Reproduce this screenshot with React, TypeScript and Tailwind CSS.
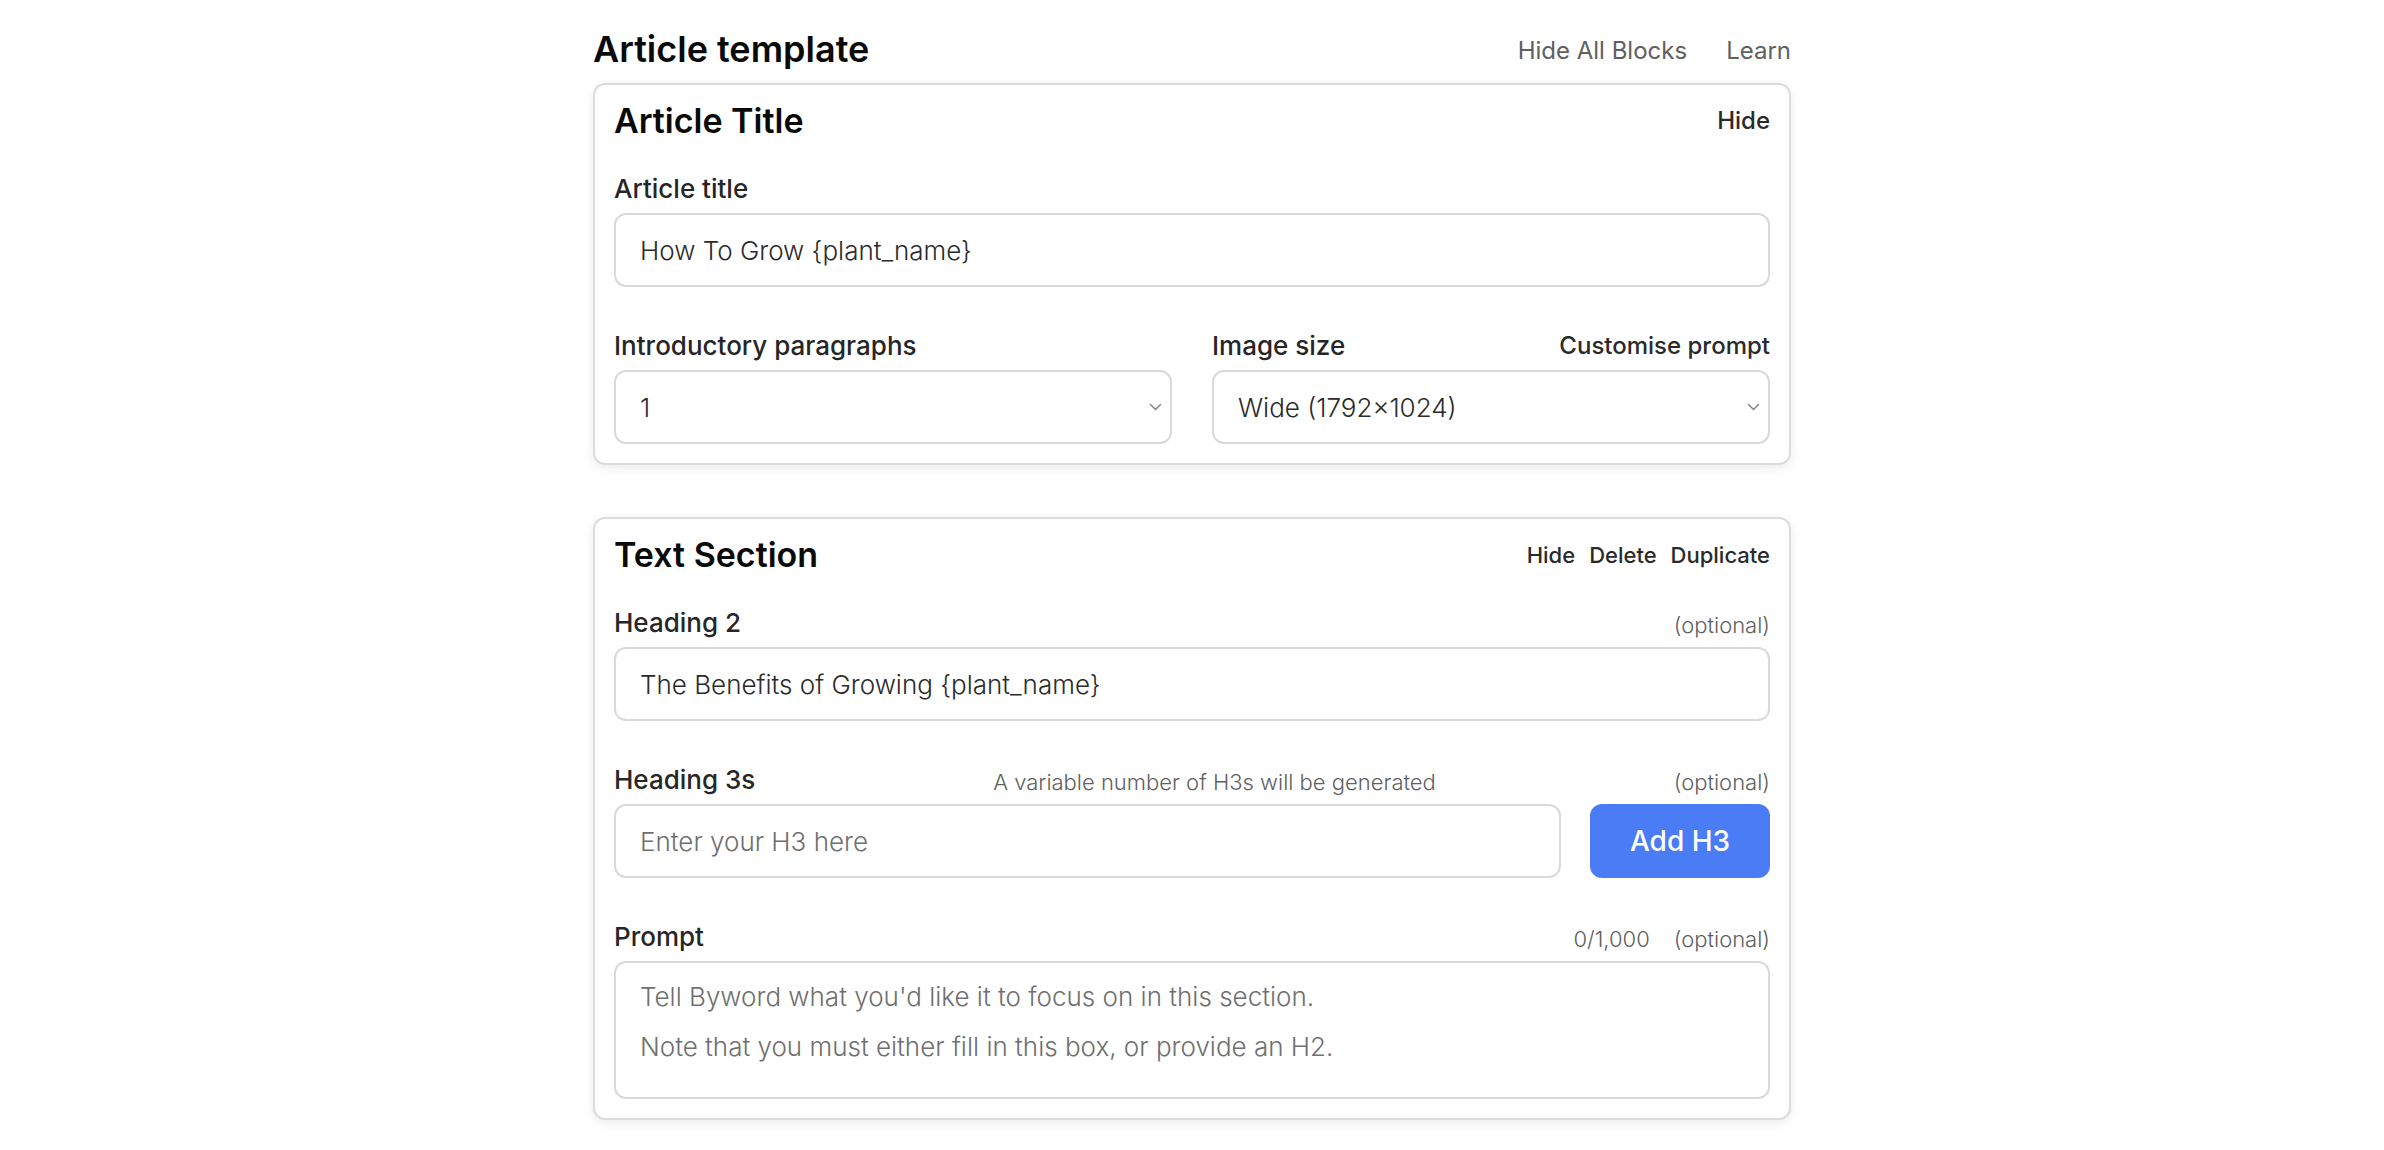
import React from 'react';

const font = { fontFamily: 'Inter, "Noto Sans", sans-serif' };

function Chevron() {
  return (
    <svg
      className="pointer-events-none absolute right-[10px] top-1/2 -translate-y-1/2"
      width="13"
      height="8"
      viewBox="0 0 13 8"
      fill="none"
    >
      <path d="M1.5 1.5l5 5 5-5" stroke="#8a8a8a" strokeWidth="1.6" strokeLinecap="round" strokeLinejoin="round" />
    </svg>
  );
}

interface LabelRowProps {
  label: string;
  right?: React.ReactNode;
  middle?: React.ReactNode;
}

function LabelRow({ label, right, middle }: LabelRowProps) {
  return (
    <div className="mb-[6px] flex h-[36px] items-center justify-between">
      <span className="text-[26px] font-medium leading-none text-[#262626]">{label}</span>
      {middle}
      {right}
    </div>
  );
}

function Optional() {
  return <span className="pt-[4px] text-[22px] font-light text-[#5f5f5f]">(optional)</span>;
}

const inputCls =
  'h-[74px] w-full rounded-[12px] border-2 border-[#d9d9d9] bg-white px-[24px] text-[26px] font-light text-[#2b2b2b] outline-none placeholder:text-[#6f6f6f]';

function Select({ value }: { value: string }) {
  return (
    <div className="relative">
      <select className={inputCls + ' appearance-none'} defaultValue={value}>
        <option>{value}</option>
      </select>
      <Chevron />
    </div>
  );
}

function Card({ title, actions, actionSize, children }: { title: string; actions: string[]; actionSize: string; children: React.ReactNode }) {
  return (
    <div className="rounded-[12px] border-2 border-[#dcdcdc] bg-white px-[19px] pb-[19px] pt-[12px] shadow-[0_3px_12px_rgba(0,0,0,0.08)]">
      <div className="mb-[26px] flex h-[48px] items-center justify-between">
        <h2 className="text-[34px] font-semibold leading-none text-[#0a0a0a]">{title}</h2>
        <div className={'flex items-center gap-[14px] font-medium text-[#2a2a2a] ' + actionSize}>
          {actions.map((a) => (
            <button key={a}>{a}</button>
          ))}
        </div>
      </div>
      <div className="flex flex-col gap-[41px]">{children}</div>
    </div>
  );
}

export default function App() {
  return (
    <div className="min-h-screen bg-white" style={font}>
      <div className="mx-auto w-[1198px] pt-[24px]">
        <div className="mb-[9px] flex h-[50px] items-center justify-between">
          <h1 className="text-[36px] font-semibold leading-none text-[#0a0a0a]">Article template</h1>
          <div className="flex items-center gap-[39px] pt-[4px] text-[24px] text-[#606060]">
            <button>Hide All Blocks</button>
            <button>Learn</button>
          </div>
        </div>

        <div className="flex flex-col gap-[52px]">
          <Card title="Article Title" actions={['Hide']} actionSize="text-[24px]">
            <div>
              <LabelRow label="Article title" />
              <input className={inputCls} defaultValue="How To Grow {plant_name}" />
            </div>
            <div className="grid grid-cols-2 gap-[40px]">
              <div>
                <LabelRow label="Introductory paragraphs" />
                <Select value="1" />
              </div>
              <div>
                <LabelRow
                  label="Image size"
                  right={<span className="text-[24px] font-medium text-[#2a2a2a]">Customise prompt</span>}
                />
                <Select value="Wide (1792×1024)" />
              </div>
            </div>
          </Card>

          <Card title="Text Section" actions={['Hide', 'Delete', 'Duplicate']} actionSize="text-[22px]">
            <div>
              <LabelRow label="Heading 2" right={<Optional />} />
              <input className={inputCls} defaultValue="The Benefits of Growing {plant_name}" />
            </div>
            <div>
              <LabelRow
                label="Heading 3s"
                middle={
                  <span className="pt-[4px] text-[22px] font-light text-[#5f5f5f]">
                    A variable number of H3s will be generated
                  </span>
                }
                right={<Optional />}
              />
              <div className="flex gap-[29px]">
                <input className={inputCls} placeholder="Enter your H3 here" />
                <button className="h-[74px] w-[180px] shrink-0 rounded-[12px] bg-[#4a7cf5] text-[28px] font-medium text-white">
                  Add H3
                </button>
              </div>
            </div>
            <div>
              <LabelRow
                label="Prompt"
                right={
                  <div className="flex gap-[24px] pt-[4px] text-[22px] font-light text-[#5f5f5f]">
                    <span>0/1,000</span>
                    <span>(optional)</span>
                  </div>
                }
              />
              <textarea
                className="block h-[138px] w-full resize-none rounded-[12px] border-2 border-[#d9d9d9] bg-white px-[24px] pt-[21px] text-[26px] font-light leading-[25px] text-[#2b2b2b] outline-none placeholder:text-[#6f6f6f]"
                placeholder={"Tell Byword what you'd like it to focus on in this section.\n\nNote that you must either fill in this box, or provide an H2."}
              />
            </div>
          </Card>
        </div>
      </div>
    </div>
  );
}
